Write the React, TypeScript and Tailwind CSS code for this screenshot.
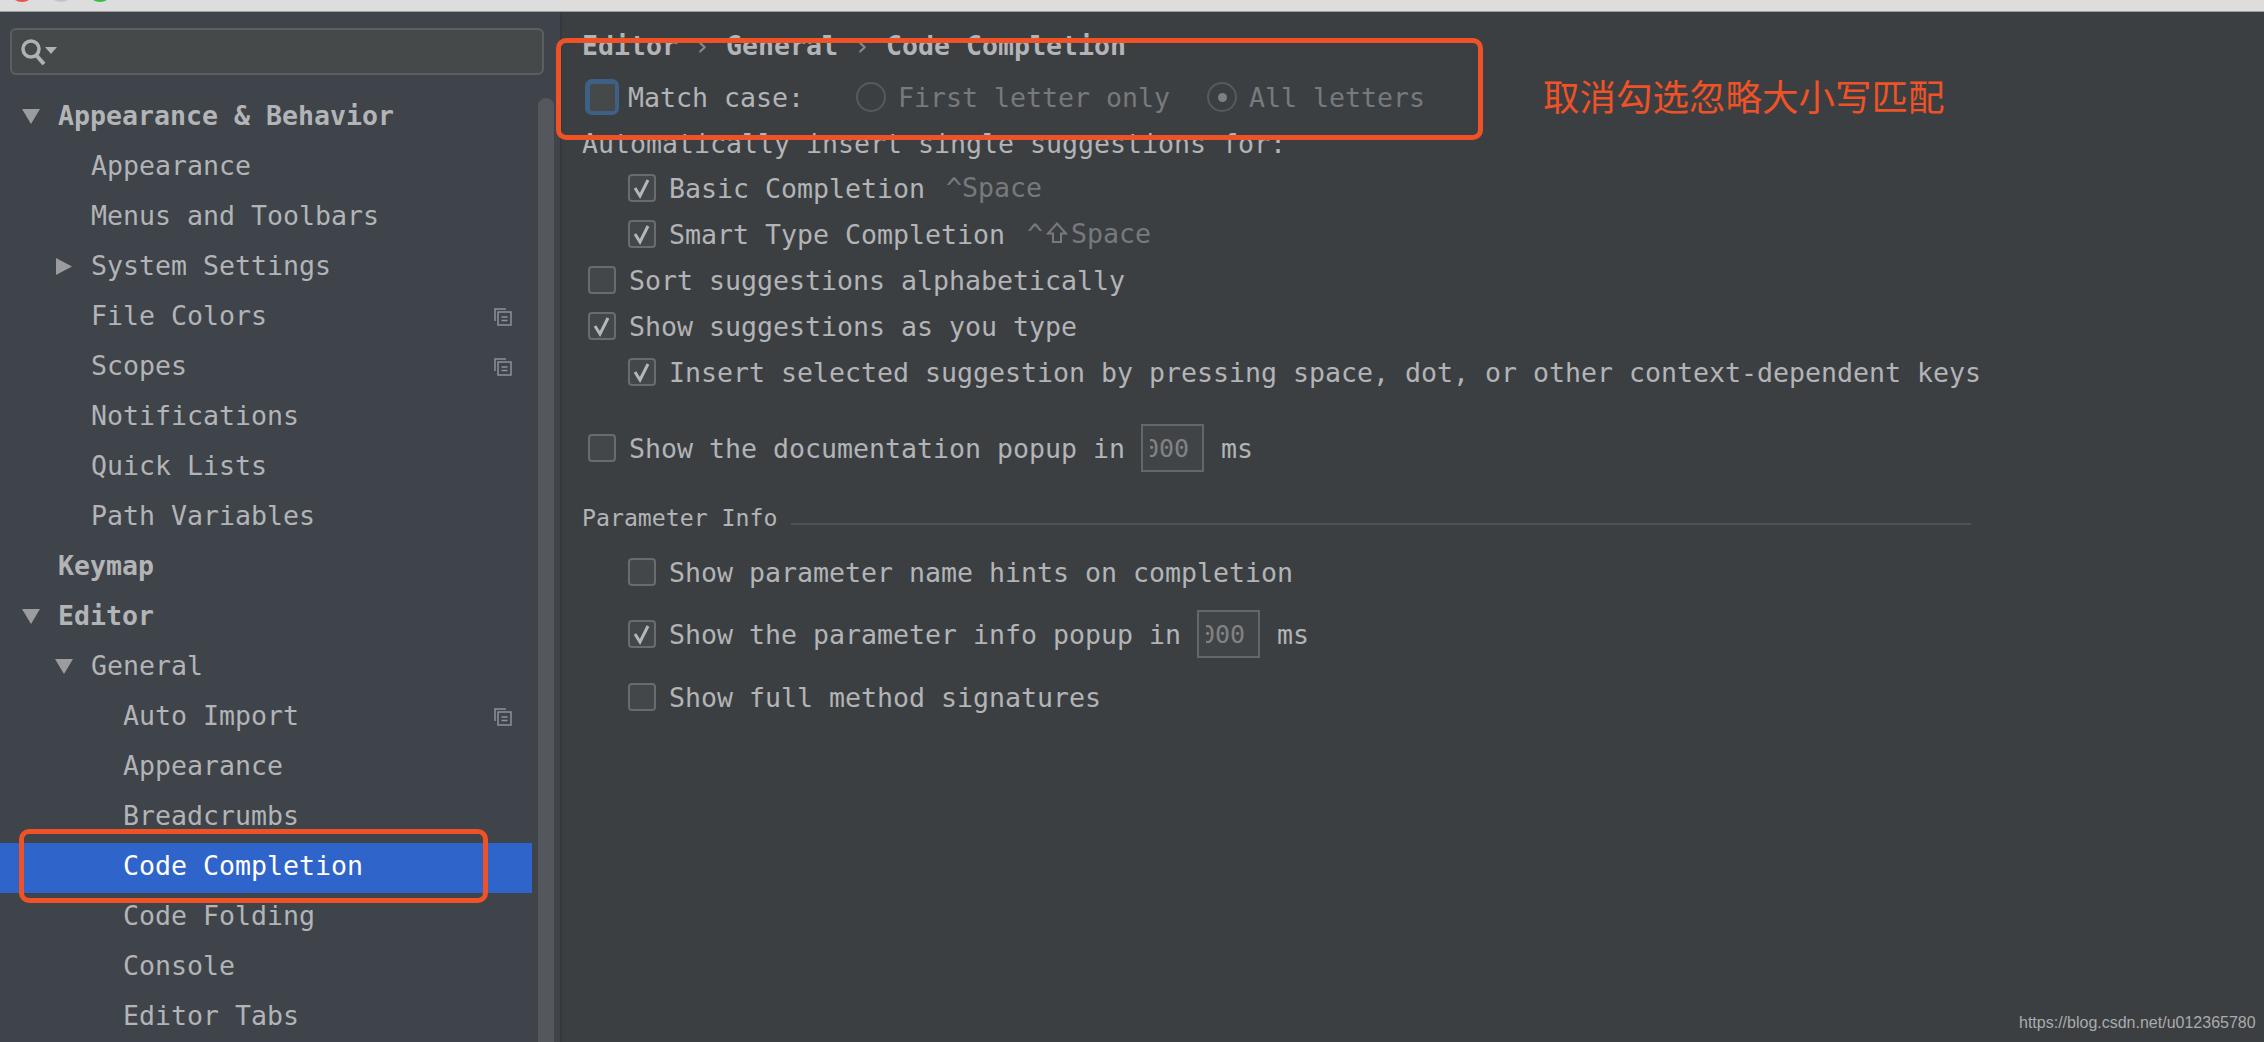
import type { ReactNode } from 'react';

const treeItems: { label: string; level: 0 | 1 | 2; arrow?: 'down' | 'right'; shared?: boolean; selected?: boolean }[] = [
  { label: 'Appearance & Behavior', level: 0, arrow: 'down' },
  { label: 'Appearance', level: 1 },
  { label: 'Menus and Toolbars', level: 1 },
  { label: 'System Settings', level: 1, arrow: 'right' },
  { label: 'File Colors', level: 1, shared: true },
  { label: 'Scopes', level: 1, shared: true },
  { label: 'Notifications', level: 1 },
  { label: 'Quick Lists', level: 1 },
  { label: 'Path Variables', level: 1 },
  { label: 'Keymap', level: 0 },
  { label: 'Editor', level: 0, arrow: 'down' },
  { label: 'General', level: 1, arrow: 'down' },
  { label: 'Auto Import', level: 2, shared: true },
  { label: 'Appearance', level: 2 },
  { label: 'Breadcrumbs', level: 2 },
  { label: 'Code Completion', level: 2, selected: true },
  { label: 'Code Folding', level: 2 },
  { label: 'Console', level: 2 },
  { label: 'Editor Tabs', level: 2 },
];

const levelCls = { 0: 'pl-[22px]', 1: 'pl-[55px]', 2: 'pl-[123px]' };

function Arrow({ dir }: { dir: 'down' | 'right' }) {
  return (
    <svg width="18" height="17" viewBox="0 0 18 17" fill="#9b9c9e">
      {dir === 'down' ? <path d="M0 1h18L9 16z" /> : <path d="M1 0l16 8.500L1 17z" />}
    </svg>
  );
}

function SharedIcon() {
  return (
    <svg width="18" height="18" viewBox="0 0 18 18" fill="none" stroke="#8d939a" strokeWidth="1.500" className="ml-auto mr-[20px]">
      <path d="M12 1H1v12" />
      <path d="M4 4h13v13H4z" />
      <path d="M7.500 9h6M7.500 12.500h6" />
    </svg>
  );
}

function TreeRow({ item }: { item: (typeof treeItems)[number] }) {
  return (
    <div
      className={`flex h-[50px] shrink-0 items-center pb-[3px] ${levelCls[item.level]} ${
        item.selected ? 'bg-[#2f65ca] text-white' : 'text-[#b2b4b6]'
      } ${item.level === 0 ? 'font-bold' : ''}`}
    >
      {item.level < 2 && <span className="flex w-[36px] shrink-0 items-center">{item.arrow && <Arrow dir={item.arrow} />}</span>}
      <span>{item.label}</span>
      {item.shared && <SharedIcon />}
    </div>
  );
}

function Check() {
  return (
    <svg width="24" height="24" viewBox="0 0 24 24" fill="none" stroke="#b4b6b8" strokeWidth="3">
      <path d="M5 12l5 8 8-16" />
    </svg>
  );
}

function Checkbox({ checked }: { checked?: boolean }) {
  return (
    <span className="flex h-[28px] w-[28px] shrink-0 items-center justify-center rounded-[4px] border-2 border-[#696b6d] bg-[#43474a]">
      {checked && <Check />}
    </span>
  );
}

function Radio({ checked }: { checked?: boolean }) {
  return (
    <span className="flex h-[30px] w-[30px] shrink-0 items-center justify-center rounded-full border-2 border-[#575a5c]">
      {checked && <span className="h-[9px] w-[9px] rounded-full bg-[#7d7f81]" />}
    </span>
  );
}

function NumberBox() {
  return (
    <span className="flex h-[48px] w-[63px] shrink-0 items-center border-2 border-[#646668] bg-[#414446] pl-[7px]">
      <span className="flex w-[42px] justify-end overflow-hidden pr-[3px] text-[25px] text-[#808284]">1000</span>
    </span>
  );
}

function ShiftArrow() {
  return (
    <svg width="22" height="21" viewBox="0 0 22 21" fill="none" stroke="#77797b" strokeWidth="2" className="mx-[3px] inline-block align-baseline">
      <path d="M11 1.500l9 10h-5v8.500H7v-8.500H2z" />
    </svg>
  );
}

function Option({
  checked,
  indent,
  h = 'h-[46px]',
  children,
}: {
  checked?: boolean;
  indent?: boolean;
  h?: string;
  children: ReactNode;
}) {
  return (
    <div className={`flex shrink-0 items-center ${h} ${indent ? 'pl-[46px]' : 'pl-[6px]'}`}>
      <Checkbox checked={checked} />
      <span className="ml-[13px] pt-[2px]">{children}</span>
    </div>
  );
}

export default function App() {
  return (
    <div className="relative flex h-screen w-full flex-col overflow-hidden bg-[#3c3f42] font-['DejaVu_Sans_Mono',monospace] text-[26.58px] leading-none text-[#b2b4b6]">
      {/* Title bar */}
      <div className="flex h-[12px] shrink-0 gap-[13px] overflow-hidden border-b border-[#9f9f9f] bg-[#dddddd] pl-[9px]">
        <span className="-mt-[24px] h-[26px] w-[26px] rounded-full bg-[#ee4f47]" />
        <span className="-mt-[24px] h-[26px] w-[26px] rounded-full bg-[#c4c4c4]" />
        <span className="-mt-[24px] h-[26px] w-[26px] rounded-full bg-[#35c13f]" />
      </div>

      <div className="flex min-h-0 flex-1">
        {/* Sidebar */}
        <aside className="flex w-[562px] shrink-0 flex-col border-r-2 border-[#36383b] bg-[#3f434a]">
          <div className="ml-[10px] mt-[16px] flex h-[47px] w-[534px] shrink-0 items-center rounded-[6px] border-2 border-[#5c5e5f] bg-[#45494a] pl-[9px]">
            <svg width="36" height="26" viewBox="0 0 36 26" fill="none">
              <circle cx="10" cy="10" r="8" stroke="#afb1b3" strokeWidth="3.500" />
              <path d="M15 16l8 9" stroke="#afb1b3" strokeWidth="4" />
              <path d="M24 8h12l-6 7z" fill="#afb1b3" />
            </svg>
          </div>
          <div className="mt-[18px] flex min-h-0 flex-1">
            <div className="flex w-[532px] shrink-0 flex-col">
              {treeItems.map((item, i) => (
                <TreeRow key={i} item={item} />
              ))}
            </div>
            <div className="ml-[6px] mt-[5px] w-[16px] rounded-t-[8px] bg-[#54575c]" />
          </div>
        </aside>

        {/* Settings panel */}
        <main className="flex min-w-0 flex-1 flex-col pl-[20px] pt-[10px]">
          <div className="flex h-[46px] shrink-0 items-center pt-[2px] font-bold whitespace-pre">
            Editor <span className="font-normal text-[#8b8d8f]">›</span> General <span className="font-normal text-[#8b8d8f]">›</span> Code Completion
          </div>

          <div className="flex h-[58px] shrink-0 items-center pl-[3px]">
            <span className="flex h-[36px] w-[34px] shrink-0 items-center justify-center rounded-[7px] bg-[#3d6185]">
              <span className="h-[27px] w-[25px] rounded-[2px] bg-[#45494a]" />
            </span>
            <span className="ml-[9px] pt-[2px]">Match case:</span>
            <span className="ml-[52px]"><Radio /></span>
            <span className="ml-[12px] pt-[2px] text-[#77797b]">First letter only</span>
            <span className="ml-[37px]"><Radio checked /></span>
            <span className="ml-[12px] pt-[2px] text-[#77797b]">All letters</span>
          </div>

          <div className="flex h-[34px] shrink-0 items-center pt-[2px]">Automatically insert single suggestions for:</div>

          <div className="mt-[5px] flex flex-col">
            <Option checked indent>
              Basic Completion<span className="ml-[21px] inline-block -translate-y-[1px] text-[#77797b]">^Space</span>
            </Option>
            <Option checked indent>
              Smart Type Completion
              <span className="ml-[22px] inline-block -translate-y-[1px] text-[#77797b]">
                ^<ShiftArrow />Space
              </span>
            </Option>
            <Option>Sort suggestions alphabetically</Option>
            <Option checked>Show suggestions as you type</Option>
            <Option checked indent>
              Insert selected suggestion by pressing space, dot, or other context-dependent keys
            </Option>
          </div>

          <div className="mt-[29px] flex h-[48px] shrink-0 items-center pl-[6px]">
            <Checkbox />
            <span className="ml-[13px] pt-[2px]">Show the documentation popup in</span>
            <span className="ml-[16px]"><NumberBox /></span>
            <span className="ml-[17px] pt-[2px]">ms</span>
          </div>

          {/* Parameter Info */}
          <div className="mt-[30px] flex h-[30px] w-[1389px] shrink-0 items-center">
            <span className="pt-[2px] text-[23.200px]">Parameter Info</span>
            <span className="ml-[14px] mt-[14px] h-[2px] flex-1 bg-[#505254]" />
          </div>

          <div className="mt-[17px]">
            <Option indent>Show parameter name hints on completion</Option>
          </div>
          <div className="mt-[15px] flex h-[48px] shrink-0 items-center pl-[46px]">
            <Checkbox checked />
            <span className="ml-[13px] pt-[2px]">Show the parameter info popup in</span>
            <span className="ml-[16px]"><NumberBox /></span>
            <span className="ml-[17px] pt-[2px]">ms</span>
          </div>
          <div className="mt-[16px]">
            <Option indent>Show full method signatures</Option>
          </div>
        </main>
      </div>

      {/* Annotations drawn over the screenshot */}
      <div className="absolute left-[556px] top-[38px] h-[102px] w-[927px] rounded-[10px] border-[5px] border-[#ee5226]" />
      <div className="absolute left-[19px] top-[829px] h-[74px] w-[469px] rounded-[10px] border-[5px] border-[#ee5226]" />
      <div className="absolute left-[1543px] top-[76px] font-['Noto_Sans_CJK_SC',sans-serif] text-[36.500px] leading-[40px] text-[#ee5226]">
        取消勾选忽略大小写匹配
      </div>
      <div className="absolute left-[2019px] top-[1014px] font-['Liberation_Sans',sans-serif] text-[16px] leading-[18px] text-[#a9abad]">
        https://blog.csdn.net/u012365780
      </div>
    </div>
  );
}
